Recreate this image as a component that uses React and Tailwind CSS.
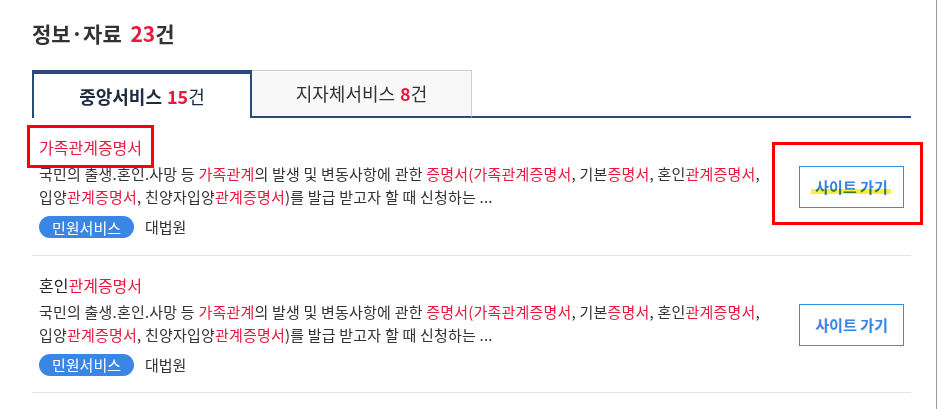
import React from "react";

const R = ({ children }) => <span className="text-[#e8193c]">{children}</span>;

function Item({ title, first }) {
  return (
    <div className="relative flex items-center border-b border-[#e2e2e2] px-[7px] pt-[18px] pb-[16px]">
      <div className="flex-1">
        <div className="text-[16px] leading-[22px] text-[#222]">{title}</div>
        <div className="mt-[4px] text-[15px] leading-[23px] text-[#333] tracking-[0.2px]">
          <div className="whitespace-nowrap">
            국민의 출생.혼인.사망 등 <R>가족관계</R>의 발생 및 변동사항에 관한 <R>증명서(</R>
            <R>가족관계증명서</R>, 기본<R>증명서</R>, 혼인<R>관계증명서</R>,
          </div>
          <div className="whitespace-nowrap">
            입양<R>관계증명서</R>, 친양자입양<R>관계증명서</R>)를 발급 받고자 할 때 신청하는 ...
          </div>
        </div>
        <div className="mt-[8px] flex items-center gap-[11px]">
          <span className="flex h-[22px] items-center rounded-full bg-[#3a86e4] px-[13px] text-[15px] leading-none text-white">
            민원서비스
          </span>
          <span className="text-[15px] text-[#333]">대법원</span>
        </div>
      </div>
      <button className="relative flex h-[42px] w-[105px] items-center justify-center border border-[#2f90ec] bg-white text-[15px] font-semibold text-[#3585e0]">
        <span className="relative">
          사이트 가기
          {first && (
            <span className="absolute left-[-4px] right-[-3px] top-[13px] h-[5px] bg-[#f4f03c] mix-blend-multiply"></span>
          )}
        </span>
      </button>
      {first && (
        <>
          <div className="pointer-events-none absolute left-[-5px] top-[7px] h-[43px] w-[127px] border-[3px] border-[#ff0000]"></div>
          <div className="pointer-events-none absolute left-[740px] top-[24px] h-[83px] w-[151px] border-[3px] border-[#ff0000]"></div>
        </>
      )}
    </div>
  );
}

export default function App() {
  return (
    <div className="min-h-[409px] w-[937px] border-r border-[#9a9a9a] bg-white pl-[32px] pr-[25px] font-['Noto_Sans_CJK_KR','Noto_Sans',sans-serif]">
      <h2 className="pt-[18px] text-[21px] font-bold leading-[30px] text-[#333]">
        정보·자료 <span className="ml-[4px] text-[#e8193c]">23</span>건
      </h2>
      <div className="mt-[22px] flex h-[48px]">
        <div className="flex w-[220px] items-center justify-center border-l-2 border-r-2 border-t-4 border-[#2b4a7b] bg-white text-[18px] text-[#1f2b40]">
          <span className="font-bold">중앙서비스</span>
          <span className="ml-[5px] font-bold text-[#e8193c]">15</span>
          <span>건</span>
        </div>
        <div className="flex w-[220px] items-center justify-center border-b-2 border-r border-t border-b-[#2b4a7b] border-r-[#cfcfcf] border-t-[#cfcfcf] bg-[#f8f8f8] text-[18px] text-[#333]">
          <span>지자체서비스</span>
          <span className="ml-[5px] font-bold text-[#e8193c]">8</span>
          <span>건</span>
        </div>
        <div className="flex-1 border-b-2 border-[#2b4a7b]"></div>
      </div>
      <Item first title={<span className="text-[#e8193c]">가족관계증명서</span>} />
      <Item title={<span>혼인<R>관계증명서</R></span>} />
    </div>
  );
}
